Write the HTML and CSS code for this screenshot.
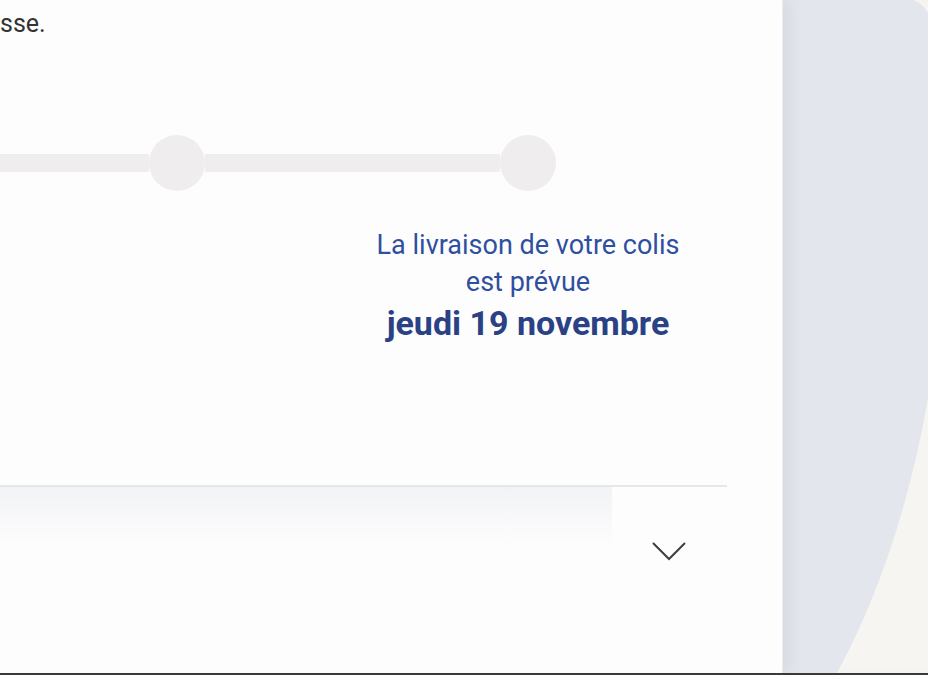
FILE: index.html
```html
<!DOCTYPE html>
<html lang="fr">
<head>
    <meta charset="UTF-8">
    <meta name="viewport" content="width=device-width, initial-scale=1.0">
    <title>Suivi de colis</title>
    <link rel="stylesheet" href="styles.css">
</head>
<body>
    <div class="page">
        <main class="card">
            <p class="intro">sse.</p>

            <div class="timeline">
                <span class="seg seg-first"></span>
                <span class="dot"></span>
                <span class="seg"></span>
                <span class="dot"></span>
            </div>

            <div class="delivery">
                <p>La livraison de votre colis<br>est prévue</p>
                <p class="date">jeudi 19 novembre</p>
            </div>

            <div class="details">
                <div class="details-fade"></div>
                <button class="toggle" aria-label="Afficher le détail">
                    <svg width="34" height="20" viewBox="0 0 34 20">
                        <polyline points="1,2 17,18 33,2" fill="none" stroke="#3d3d3d" stroke-width="2"/>
                    </svg>
                </button>
            </div>
        </main>

        <aside class="side">
            <svg class="blob" viewBox="0 0 145 673" preserveAspectRatio="none">
                <path d="M0,0 L130,0 Q141,4 146,15 L146,393 Q118,555 54,673 L0,673 Z" fill="#e3e6ec"/>
            </svg>
        </aside>
    </div>
    <div class="bottom-bar"></div>
</body>
</html>
```

FILE: styles.css
```css
* {
    box-sizing: border-box;
}
body {
    margin: 0;
    font-family: Roboto, "Noto Sans", Arial, sans-serif;
    background: #f6f5f1;
}
.page {
    display: flex;
    height: 673px;
}
.card {
    width: 783px;
    flex-shrink: 0;
    background: #fdfdfd;
    border-right: 1px solid #ececec;
    box-shadow: 6px 0 14px rgba(60, 70, 90, 0.08);
    position: relative;
    z-index: 1;
}
.intro {
    margin: 0;
    padding-top: 7px;
    font-size: 25px;
    line-height: 34px;
    color: #333;
}
.timeline {
    display: flex;
    align-items: center;
    width: 556px;
    margin-top: 94px;
}
.seg {
    flex: 1;
    height: 18px;
    background: #efedee;
}
.seg-first {
    flex: 0 0 149px;
}
.dot {
    width: 56px;
    height: 56px;
    border-radius: 50%;
    background: #efedee;
}
.delivery {
    width: 400px;
    margin: 36px 0 0 328px;
    text-align: center;
    color: #2f4f9f;
}
.delivery p {
    margin: 0;
    font-size: 27px;
    line-height: 37px;
}
.delivery .date {
    font-size: 34px;
    line-height: 44px;
    font-weight: bold;
    color: #2a4285;
}
.details {
    display: flex;
    width: 727px;
    margin-top: 140px;
    border-top: 2px solid #e7e7e9;
    height: 120px;
}
.details-fade {
    width: 612px;
    height: 60px;
    background: linear-gradient(#f2f3f6, rgba(253, 253, 253, 0));
}
.toggle {
    flex: 1;
    height: 120px;
    border: none;
    background: transparent;
    padding: 54px 0 0 40px;
    display: flex;
    align-items: flex-start;
    justify-content: flex-start;
    cursor: pointer;
}
.side {
    flex: 1;
    position: relative;
    box-shadow: inset 12px 0 14px -8px rgba(90, 100, 120, 0.12);
}
.blob {
    display: block;
    width: 100%;
    height: 100%;
}
.bottom-bar {
    height: 2px;
    background: #3a3a3a;
}
```
